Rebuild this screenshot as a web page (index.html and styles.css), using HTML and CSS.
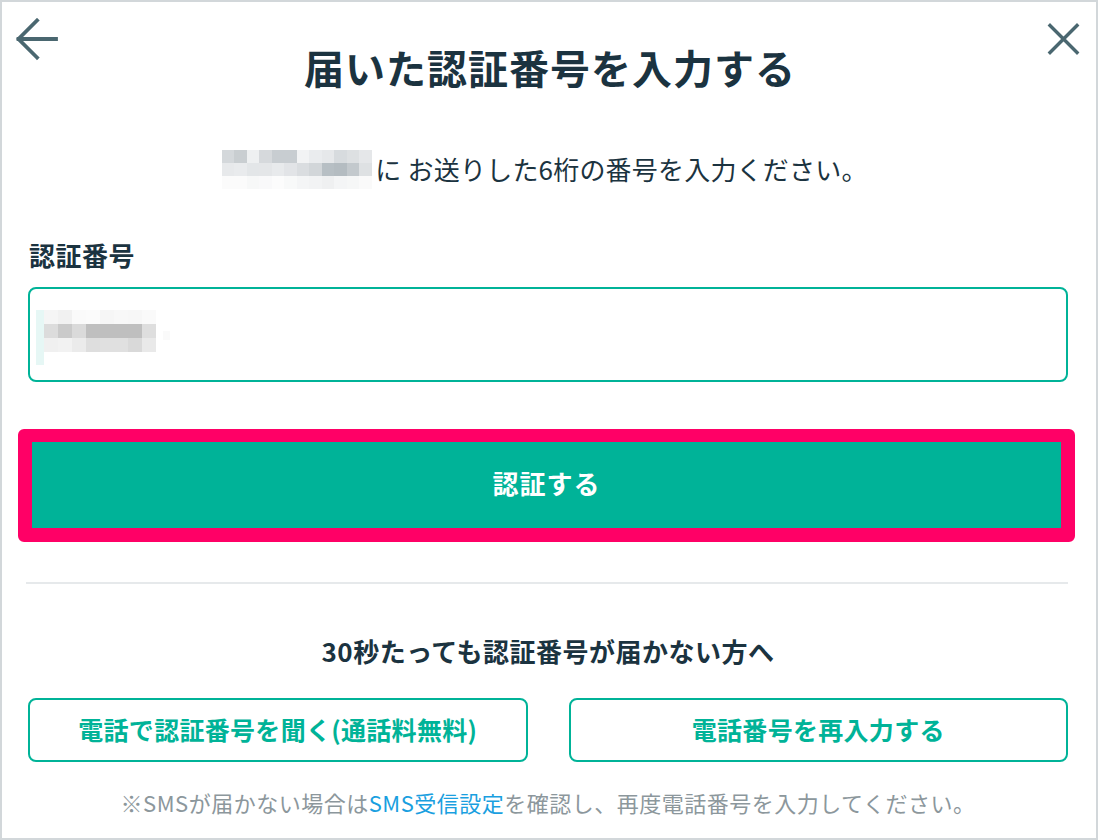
FILE: index.html
```html
<!DOCTYPE html>
<html lang="ja">
<head>
<meta charset="utf-8">
<title>届いた認証番号を入力する</title>
<link rel="stylesheet" href="styles.css">
</head>
<body>
<div class="frame">
  <header class="header">
    <svg class="icon-back" width="44" height="44" viewBox="0 0 44 44" aria-label="戻る">
      <path d="M23 2.5 L4.5 21 L23 39.5 M4.5 21 H42" fill="none" stroke="#4a6770" stroke-width="3.8" stroke-linecap="square" stroke-linejoin="miter"/>
    </svg>
    <h1 class="title">届いた認証番号を入力する</h1>
    <svg class="icon-close" width="44" height="44" viewBox="0 0 44 44" aria-label="閉じる">
      <path d="M8 7.5 L35 34.5 M35 7.5 L8 34.5" fill="none" stroke="#4a6770" stroke-width="3.4" stroke-linecap="square"/>
    </svg>
  </header>
  <main class="content">
    <p class="lead">
      <span class="mosaic mosaic-phone">
        <span class="mrow r1"></span>
        <span class="mrow r2"></span>
        <span class="mrow r3"></span>
      </span>
      <span class="lead-text">に お送りした6桁の番号を入力ください。</span>
    </p>
    <label class="field-label">認証番号</label>
    <div class="field">
      <span class="caret"></span>
      <span class="mosaic mosaic-code">
        <span class="crow c1"></span>
        <span class="crow c2"></span>
        <span class="crow c3"></span>
      </span>
      <span class="ghost"></span>
    </div>
    <div class="highlight">
      <button class="btn-primary">認証する</button>
    </div>
    <hr class="divider">
    <h2 class="sub-heading">30秒たっても認証番号が届かない方へ</h2>
    <div class="actions">
      <button class="btn-outline">電話で認証番号を聞く(通話料無料)</button>
      <button class="btn-outline">電話番号を再入力する</button>
    </div>
    <p class="note">※SMSが届かない場合は<a class="link" href="#">SMS受信設定</a>を確認し、再度電話番号を入力してください。</p>
  </main>
</div>
</body>
</html>
```
FILE: styles.css
```css
* { box-sizing: border-box; }
html, body { margin: 0; padding: 0; background: #fff; }
body {
  font-family: "Noto Sans CJK JP", "Noto Sans", sans-serif;
  color: #1b3340;
}
.frame {
  width: 1098px;
  height: 840px;
  border: 2px solid #d2d7da;
  background: #fff;
  overflow: hidden;
}
.header {
  display: grid;
  grid-template-columns: 44px 1fr 44px;
  align-items: start;
  padding: 16px 10px 0 12px;
}
.icon-back, .icon-close { display: block; }
.title {
  margin: 25px 0 0;
  text-align: center;
  font-size: 40px;
  line-height: 48px;
  font-weight: 700;
  color: #1b3340;
  letter-spacing: 1px;
}
.content {
  padding: 0 28px 0 26px;
}
.lead {
  margin: 58px 0 0;
  display: flex;
  justify-content: center;
  align-items: center;
  height: 40px;
  padding-right: 6px;
}
.lead-text {
  font-size: 26px;
  line-height: 40px;
  letter-spacing: 0.2px;
  margin-left: 3px;
}
.mosaic { display: flex; flex-direction: column; flex: none; }
.mosaic-phone { width: 150px; height: 39px; }
.mrow { display: block; height: 13px; }
.r1 { background: linear-gradient(90deg,
  #d4d8db 0 12.5px, #c9ced1 12.5px 25px, #eef0f1 25px 37.5px, #d6d9dc 37.5px 50px,
  #c8cdd1 50px 75px, #f2f3f4 75px 87.5px, #eaecee 87.5px 100px, #e6e8ea 100px 112.5px,
  #d7dbde 112.5px 125px, #dde0e2 125px 137.5px, #e5e7e9 137.5px 150px); }
.r2 { background: linear-gradient(90deg,
  #e7e9eb 0 12.5px, #e9ebed 12.5px 25px, #e3e6e8 25px 37.5px, #e4e6e8 37.5px 50px,
  #e8eaec 50px 62.5px, #e2e4e7 62.5px 75px, #dadde0 75px 87.5px, #d2d6d9 87.5px 100px,
  #b7bfc4 100px 112.5px, #b4bcc1 112.5px 125px, #c3c9cd 125px 137.5px, #dee1e3 137.5px 150px); }
.r3 { background: linear-gradient(90deg,
  #fbfbfb 0 25px, #f7f8f8 25px 37.5px, #f9f9fa 37.5px 50px, #fcfcfc 50px 62.5px,
  #f8f9f9 62.5px 75px, #f4f5f6 75px 87.5px, #f2f3f4 87.5px 100px, #eff0f1 100px 112.5px,
  #f4f5f6 112.5px 125px, #f6f7f7 125px 137.5px, #fafafa 137.5px 150px); }

.field-label {
  display: block;
  margin-top: 48px;
  font-size: 26px;
  line-height: 36px;
  font-weight: 700;
  letter-spacing: 0.5px;
  padding-left: 1px;
}
.field {
  margin-top: 14px;
  height: 95px;
  border: 2px solid #00b398;
  border-radius: 8px;
  display: flex;
  align-items: flex-start;
  padding: 21px 0 0 6px;
}
.caret { display: block; width: 8px; height: 55px; background: #e6f7f5; }
.mosaic-code { width: 112px; height: 42px; }
.crow { display: block; height: 14px; }
.c1 { background: linear-gradient(90deg,
  #f5f5f5 0 14px, #f1f1f1 14px 28px, #fafafa 28px 42px, #fbfbfb 42px 56px,
  #f6f6f6 56px 70px, #f8f8f8 70px 84px, #f7f7f7 84px 98px, #fafafa 98px 112px); }
.c2 { background: linear-gradient(90deg,
  #dcdcdc 0 14px, #cacaca 14px 28px, #dadada 28px 42px, #bfbfbf 42px 98px, #dedede 98px 112px); }
.c3 { background: linear-gradient(90deg,
  #f0f0f0 0 14px, #f2f2f2 14px 28px, #ebebeb 28px 42px, #dedede 42px 56px,
  #e0e0e0 56px 84px, #d9d9d9 84px 98px, #e9e9e9 98px 112px); }
.ghost { display: block; width: 7px; height: 9px; margin: 21px 0 0 7px; background: #fafafa; }

.highlight {
  margin: 47px -7px 0 -10px;
  height: 113px;
  border: 14px solid #ff0066;
  border-top-width: 13px;
  border-radius: 6px;
  display: flex;
}
.btn-primary {
  flex: 1;
  border: 0;
  margin: 0;
  background: #00b398;
  color: #fff;
  font-family: inherit;
  font-size: 26px;
  font-weight: 700;
  letter-spacing: 1px;
  padding: 0 0 6px;
}
.divider {
  margin: 40px 0 0 -2px;
  border: 0;
  height: 2px;
  background: #e6e9eb;
}
.sub-heading {
  margin: 49px 0 0;
  text-align: center;
  font-size: 26px;
  line-height: 36px;
  font-weight: 700;
  letter-spacing: 0.5px;
}
.actions {
  margin-top: 29px;
  display: grid;
  grid-template-columns: 1fr 1fr;
  column-gap: 41px;
}
.btn-outline {
  height: 64px;
  background: #fff;
  border: 2px solid #00b398;
  border-radius: 8px;
  color: #00b398;
  font-family: inherit;
  font-size: 25px;
  font-weight: 700;
  letter-spacing: 0.3px;
  padding: 0 0 2px;
}
.note {
  margin: 25px 0 0;
  text-align: center;
  font-size: 22px;
  line-height: 30px;
  letter-spacing: 0.5px;
  color: #8c979c;
}
.link { color: #1a9fe0; text-decoration: none; }
```
